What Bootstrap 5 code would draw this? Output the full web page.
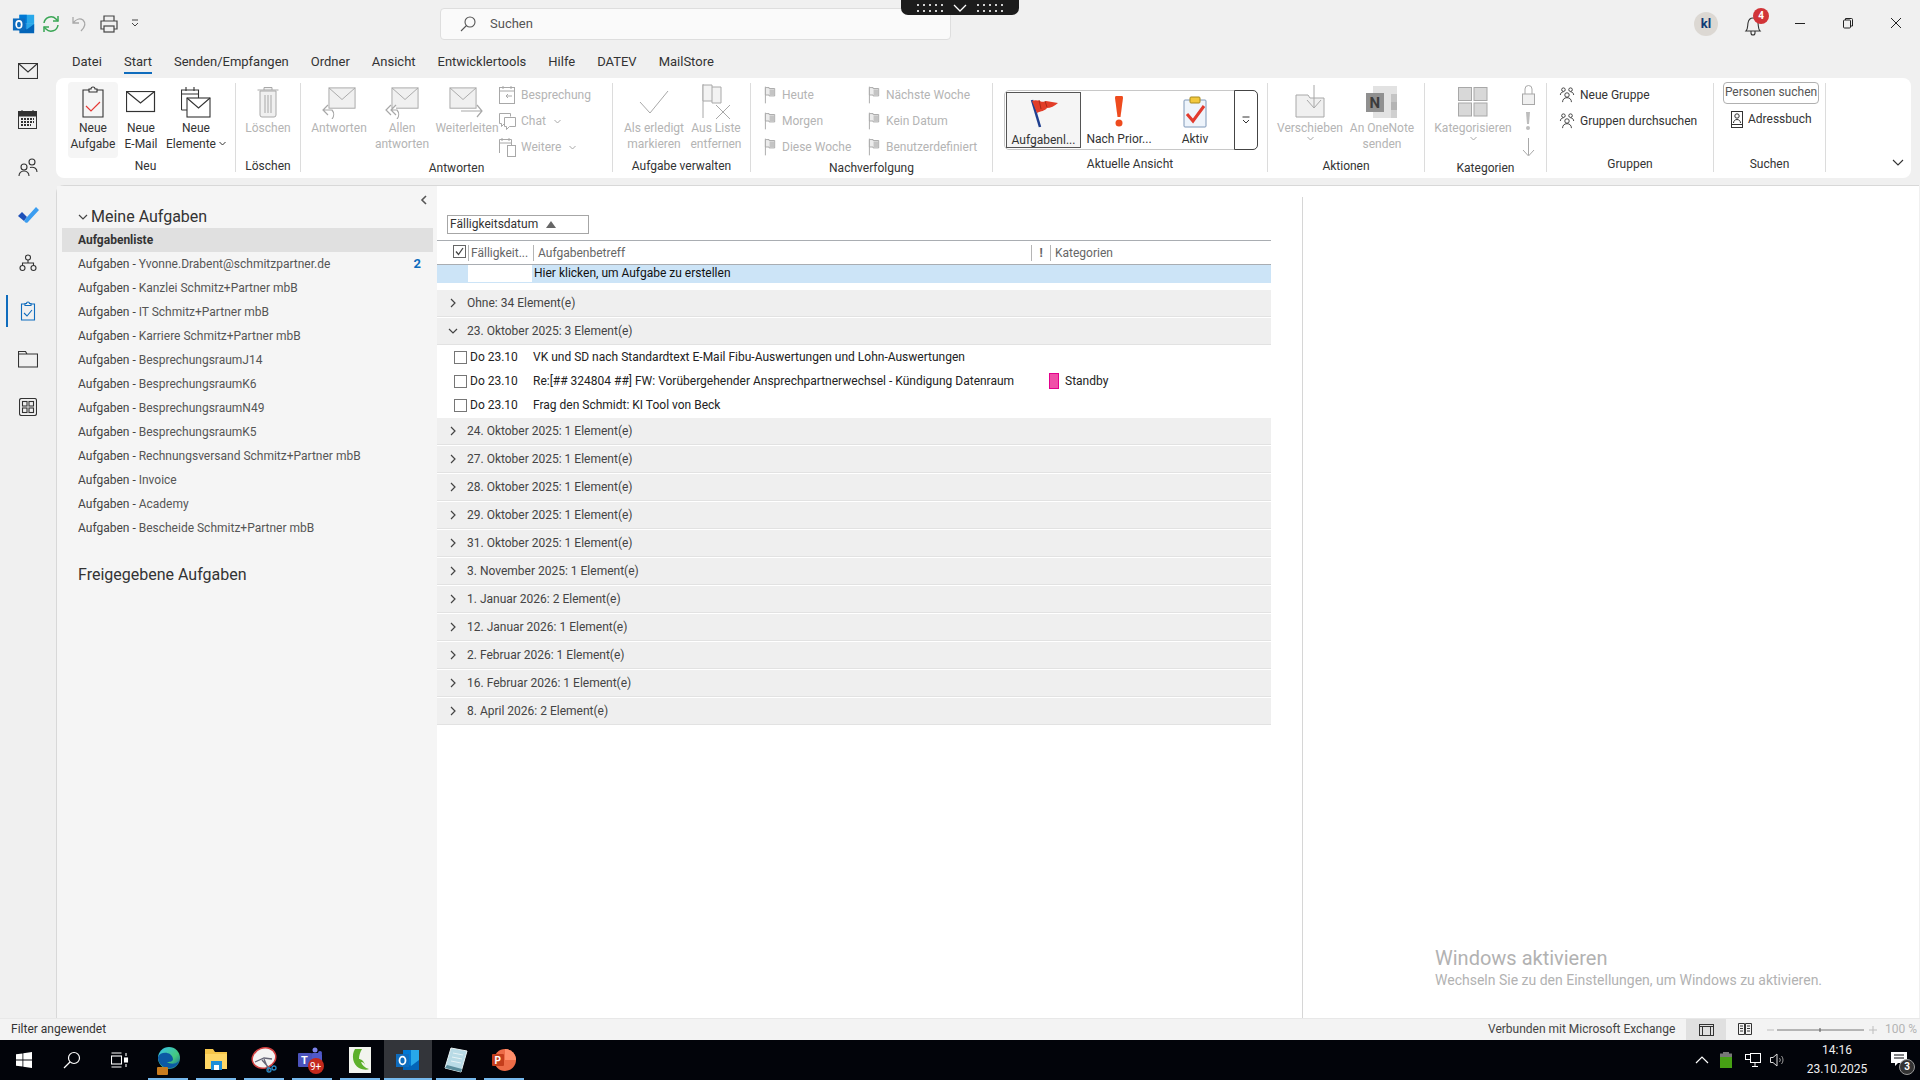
<!DOCTYPE html>
<html lang="de">
<head>
  <meta charset="UTF-8">
  <title>Aufgaben - Outlook</title>
  <link href="https://cdn.jsdelivr.net/npm/bootstrap@5.3.3/dist/css/bootstrap.min.css" rel="stylesheet">
  <style>
    body { width: 1920px; height: 1080px; overflow: hidden; background: #f0f0f0; font-family: Roboto, "Liberation Sans", sans-serif; font-size: 12px; color: #333; line-height: 16px; }
    svg { display: block; flex: none; }
    /* title bar */
    .title-bar { height: 47px; position: relative; }
    .qa-icon { width: 29px; }
    .qa-strip { padding-left: 12px; width: 440px; }
    .search-box { width: 511px; height: 32px; margin-top: 8px; background: #fafafa; border: 1px solid #dedede; border-radius: 4px; padding-left: 18px; font-size: 13px; color: #555; gap: 13px; }
    .drag-handle { position: absolute; left: 901px; top: 0; width: 118px; height: 15px; background: #1c1c1c; border-radius: 0 0 7px 7px; }
    .win-area { margin-left: auto; }
    .avatar-dot { width: 24px; height: 24px; border-radius: 50%; background: #dcd8d3; color: #0f3a76; font-weight: 700; font-size: 13px; position: absolute; left: 1694px; top: 12px; }
    .bell-wrap { position: absolute; left: 1743px; top: 13px; }
    .bell-count { position: absolute; left: 1753px; top: 8px; width: 16px; height: 16px; border-radius: 50%; background: #d13438; color: #fff; font-size: 10px; font-weight: 700; line-height: 16px; text-align: center; }
    .win-btn { position: absolute; top: 17px; }
    .win-min { left: 1794px; } .win-max { left: 1842px; } .win-close { left: 1890px; }
    /* rail */
    .rail { width: 56px; flex: none; position: relative; }
    .rail-item { height: 48px; position: relative; }
    .rail-active::before { content: ""; position: absolute; left: 6px; top: 8px; width: 2px; height: 32px; background: #0f6cbd; }
    /* tabs */
    .tab-row { height: 31px; padding-left: 8px; font-size: 13px; color: #333; }
    .tab-item { padding: 7px 8px 0; margin-right: 6px; position: relative; height: 31px; white-space: nowrap; }
    .tab-on::after { content: ""; position: absolute; left: 8px; right: 8px; bottom: 4px; height: 2px; background: #0f6cbd; }
    /* ribbon */
    .ribbon { height: 100px; width: 1855px; background: #fff; border-radius: 8px; padding: 5px 0 6px; position: relative; }
    .rb-grp { height: 89px; border-right: 1px solid #dcdcdc; flex: none; display: flex; flex-direction: column; }
    .rb-body { height: 77px; display: flex; }
    .rb-label { height: 16px; text-align: center; color: #333; white-space: nowrap; }
    .g-neu { width: 180px; } .g-neu .rb-body { padding-left: 12px; }
    .g-del { width: 65px; }
    .g-ant { width: 312px; } .g-ant .rb-body { padding-left: 8px; }
    .g-auf { width: 138px; } .g-auf .rb-body { padding-left: 9px; }
    .g-nach { width: 242px; } .g-nach .rb-body { padding-left: 13px; }
    .g-ans { width: 275px; }
    .g-akt { width: 157px; } .g-akt .rb-body { padding-left: 9px; }
    .g-kat { width: 122px; } .g-kat .rb-body { padding-left: 10px; }
    .g-gru { width: 167px; } .g-gru .rb-body { padding-left: 12px; }
    .g-suc { width: 112px; } .g-suc .rb-body { padding-left: 9px; }
    .rb-big { margin-top: -1px; height: 76px; display: flex; flex-direction: column; align-items: center; text-align: center; border-radius: 4px; flex: none; }
    .rb-big .big-ico { height: 38px; display: flex; align-items: center; justify-content: center; padding-top: 2px; }
    .big-50 { width: 50px; background: #f5f5f5; } .big-46 { width: 46px; } .big-64 { width: 64px; } .big-65 { width: 64px; }
    .big-60 { width: 60px; } .big-66 { width: 66px; } .big-78 { width: 78px; } .big-76 { width: 76px; }
    .off { color: #b4b4b4; }
    .rb-col { margin-top: -1px; display: flex; flex-direction: column; flex: none; }
    .rb-small { height: 26px; display: flex; align-items: center; white-space: nowrap; gap: 5px; }
    .col-w1 { width: 104px; }
    .col-kat { width: 34px; align-items: center; }
    .tiny-caret { display: inline-block; margin-left: 3px; vertical-align: 2px; }
    .galley { margin: 7px 0 0 11px; width: 254px; height: 60px; border: 1px solid #c8c8c8; border-radius: 5px; position: relative; padding: 1px; }
    .gal-item { width: 76px; height: 56px; display: flex; flex-direction: column; align-items: center; padding-top: 4px; gap: 3px; white-space: nowrap; flex: none; }
    .gal-on { background: #f5f5f5; border: 1px solid #555; width: 75px; }
    .gal-more { position: absolute; right: -1px; top: -1px; width: 24px; height: 60px; border: 1px solid #444; border-radius: 0 5px 5px 0; background: #fff; }
    .find-box { width: 96px; height: 22px; border: 1px solid #b0b0b0; border-radius: 4px; text-align: center; line-height: 18px; color: #555; white-space: nowrap; margin-bottom: 2px; }
    .rb-collapse { position: absolute; right: 7px; top: 81px; }
    /* workspace */
    .workspace { margin-top: 7px; height: 833px; width: 1863px; background: #fff; border-radius: 8px 0 0 0; border-top: 1px solid #d8d8d8; border-left: 1px solid #d8d8d8; }
    .pane { width: 380px; flex: none; background: #f5f5f5; padding: 4px 4px 0 5px; position: relative; }
    .pane-head { height: 38px; padding-left: 16px; padding-top: 16px; font-size: 16px; line-height: 24px; gap: 3px; white-space: nowrap; color: #333; }
    .pane-toggle { position: absolute; left: 363px; top: 9px; }
    .folder-row { height: 24px; padding-left: 16px; line-height: 24px; white-space: nowrap; color: #555; }
    .folder-row b { color: #333; }
    .folder-on { background: #e0e0e0; }
    .folder-pre { color: #444; }
    .folder-num { color: #0f6cbd; font-weight: 700; font-size: 13px; margin-left: auto; margin-right: 12px; }
    .pane-shared { margin-top: 23px; padding-left: 16px; font-size: 16px; line-height: 24px; color: #333; }
    .task-area { width: 865px; flex: none; padding-top: 29px; }
    .sort-box { width: 142px; height: 19px; margin-left: 10px; border: 1px solid #a6a6a6; padding-left: 2px; line-height: 17px; gap: 8px; color: #333; }
    .col-head { margin-top: 6px; width: 834px; height: 25px; border-top: 1px solid #a9adb2; border-bottom: 1px solid #a9adb2; color: #666; align-items: center; }
    .col-a { width: 32px; height: 16px; padding-left: 16px; border-right: 1px solid #b5b5b5; flex: none; }
    .col-b { width: 65px; height: 16px; padding-left: 2px; border-right: 1px solid #b5b5b5; flex: none; white-space: nowrap; }
    .col-c { width: 498px; height: 16px; padding-left: 4px; border-right: 1px solid #b5b5b5; flex: none; }
    .col-d { width: 19px; height: 16px; border-right: 1px solid #b5b5b5; text-align: center; font-weight: 700; flex: none; }
    .col-e { padding-left: 4px; }
    .new-row { width: 834px; height: 18px; background: #cce4f7; color: #111; line-height: 17px; }
    .new-cell { width: 64px; margin-left: 31px; background: #fff; margin-right: 2px; height: 17px; }
    .grp-row { width: 834px; height: 27px; margin-bottom: 1px; background: #efefef; border-bottom: 1px solid #e2e2e2; padding-left: 11px; gap: 9px; color: #444; align-items: center; }
    .grp-first { margin-top: 7px; }
    .item-list { margin-top: -1px; margin-bottom: 1px; }
    .item-row { width: 834px; height: 24px; align-items: center; color: #222; white-space: nowrap; }
    .item-chk { width: 13px; height: 13px; margin-left: 17px; border: 1px solid #767676; flex: none; }
    .item-date { width: 66px; padding-left: 3px; flex: none; }
    .item-subj { width: 516px; flex: none; }
    .cat-tag { width: 10px; height: 16px; background: #f04fa8; border: 1px solid #e3008c; margin-right: 6px; flex: none; }
    .read-pane { flex: 1; border-left: 1px solid #d6d6d6; margin-top: 11px; margin-left: 0; }
    .win-mark { position: absolute; left: 1435px; top: 945px; color: #b2b2b2; font-size: 14px; line-height: 18px; white-space: nowrap; z-index: 3; }
    .win-mark div:first-child { font-size: 20px; line-height: 26px; }
    /* status + taskbar */
    .status-bar { height: 22px; background: #f3f3f3; border-top: 1px solid #e8e8e8; position: relative; color: #333; padding-left: 11px; line-height: 20px; }
    .status-right { margin-left: auto; }
    .status-txt { width: 198px; color: #444; white-space: nowrap; }
    .view-on { width: 40px; height: 21px; background: #e0e0e0; }
    .view-off { width: 38px; height: 21px; }
    .zoom-txt { color: #b4b4b4; width: 38px; padding-left: 3px; }
    .task-bar { height: 40px; background: #02040a; color: #f0f0f0; position: relative; }
    .tb-slot { width: 48px; height: 40px; position: relative; }
    .tb-slot.tb-run::after { content: ""; position: absolute; left: 4px; right: 4px; bottom: 0; height: 2px; background: #76b9ed; }
    .tb-slot.tb-cur { background: #33353a; }
    .tb-slot.tb-cur::after { left: 0; right: 0; }
    .tray { margin-left: auto; padding-right: 12px; gap: 0; }
    .clock-box { width: 70px; text-align: center; line-height: 19px; margin: 0 19px 0 7px; white-space: nowrap; }
    .tray-ico { width: 25px; }
    .note-wrap { position: relative; }
    .note-count { position: absolute; left: 8px; top: 7px; width: 16px; height: 16px; border-radius: 50%; background: #333; border: 1px solid #999; color: #fff; font-size: 10px; font-weight: 700; line-height: 14px; text-align: center; }
  </style>
</head>
<body class="d-flex flex-column position-relative">

  <svg width="0" height="0" class="position-absolute">
    <defs>
      <symbol id="chev-r" viewBox="0 0 10 10"><path d="M3 1l4 4-4 4" fill="none" stroke="#444" stroke-width="1.2"/></symbol>
      <symbol id="chev-d" viewBox="0 0 10 10"><path d="M1 3l4 4 4-4" fill="none" stroke="#444" stroke-width="1.2"/></symbol>
      <symbol id="flag-off" viewBox="0 0 14 18"><path d="M1.5 0v18" stroke="#a8a8a8" fill="none"/><path d="M1.5 1h4v1h6v8h-6v-1h-4z" fill="#ececec" stroke="#a8a8a8"/><rect x="6" y="3" width="5" height="6" fill="#c4c4c4"/></symbol>
      <symbol id="group-ico" viewBox="0 0 18 18"><g fill="none" stroke="#333"><circle cx="5" cy="3" r="2"/><circle cx="13" cy="3" r="2"/><circle cx="9" cy="9" r="2.5"/><path d="M1.5 9c0-2 1.500-3.500 3.500-3.500M16.500 9c0-2-1.500-3.500-3.500-3.500M4 17c0-3 2-5 5-5s5 2 5 5"/></g></symbol>
      <symbol id="envelope-off" viewBox="0 0 30 30"><rect x="1" y="3" width="27" height="21" fill="#f0f0f0" stroke="#a8a8a8"/><path d="M1 3l13.500 12L28 3" fill="none" stroke="#a8a8a8"/></symbol>
      <symbol id="olk" viewBox="0 0 26 26"><rect x="8" y="3" width="16" height="9" fill="#28a8ea"/><rect x="8" y="3" width="8" height="9" fill="#0078d4"/><rect x="16" y="12" width="8" height="8" fill="#28a8ea"/><rect x="8" y="12" width="8" height="8" fill="#0078d4"/><path d="M8 14l8 5 8-6v10H8z" fill="#0364b8"/><rect x="1" y="7" width="13" height="13" fill="#0f6cbd"/><ellipse cx="7.500" cy="13.500" rx="3" ry="3.800" fill="none" stroke="#fff" stroke-width="1.800"/></symbol>
    </defs>
  </svg>

  <!-- Titelleiste -->
  <div class="title-bar d-flex flex-none">
    <div class="qa-strip d-flex align-items-center">
      <div class="qa-icon"><svg width="24" height="24"><use href="#olk"/></svg></div>
      <div class="qa-icon"><svg width="20" height="20" viewBox="0 0 20 20" fill="none" stroke="#3aa655" stroke-width="1.500"><path d="M3 9a7 7 0 0 1 12-4l2 2M17 11a7 7 0 0 1-12 4l-2-2"/><path d="M17 2v5h-5M3 18v-5h5"/></svg></div>
      <div class="qa-icon"><svg width="20" height="20" viewBox="0 0 20 20" fill="none" stroke="#a8a8a8" stroke-width="1.300"><path d="M3 3v6h6M3 9c3-4 7-5 10-3 3 3 2 7-2 11"/></svg></div>
      <div class="qa-icon"><svg width="20" height="20" viewBox="0 0 20 20" fill="none" stroke="#444" stroke-width="1.200"><path d="M5 7V2h10v5M5 15H2V7h16v8h-3"/><rect x="5" y="12" width="10" height="6"/></svg></div>
      <div class="qa-icon"><svg width="14" height="14" viewBox="0 0 14 14" fill="none" stroke="#444"><path d="M4 3h6M4 6l3 3 3-3"/></svg></div>
    </div>
    <div class="search-box d-flex align-items-center">
      <svg width="18" height="18" viewBox="0 0 18 18" fill="none" stroke="#555" stroke-width="1.100"><circle cx="11" cy="7" r="5"/><path d="M7.500 10.500L2 16"/></svg>
      <span>Suchen</span>
    </div>
    <div class="drag-handle d-flex align-items-center justify-content-between px-3">
      <svg width="26" height="10" viewBox="0 0 26 10" fill="#cfcfcf"><path d="M0 1h2v2H0zM6 1h2v2H6zM12 1h2v2h-2zM18 1h2v2h-2zM24 1h2v2h-2zM0 7h2v2H0zM6 7h2v2H6zM12 7h2v2h-2zM18 7h2v2h-2zM24 7h2v2h-2z"/></svg>
      <svg width="14" height="8" viewBox="0 0 14 8" fill="none" stroke="#fff" stroke-width="1.300"><path d="M1 1l6 6 6-6"/></svg>
      <svg width="26" height="10" viewBox="0 0 26 10" fill="#cfcfcf"><path d="M0 1h2v2H0zM6 1h2v2H6zM12 1h2v2h-2zM18 1h2v2h-2zM24 1h2v2h-2zM0 7h2v2H0zM6 7h2v2H6zM12 7h2v2h-2zM18 7h2v2h-2zM24 7h2v2h-2z"/></svg>
    </div>
    <div class="avatar-dot d-flex align-items-center justify-content-center">kl</div>
    <div class="bell-wrap"><svg width="20" height="24" viewBox="0 0 20 24" fill="none" stroke="#333" stroke-width="1.100"><path d="M3 18c2-2 1.500-5 2-8 .5-3 2.500-5 5-5s4.500 2 5 5c.5 3 0 6 2 8zM8 18.500v1.500a2 2 0 0 0 4 0v-1.500"/></svg></div>
    <div class="bell-count">4</div>
    <svg class="win-btn win-min" width="12" height="12" viewBox="0 0 12 12" stroke="#222"><path d="M1 6.500h10"/></svg>
    <svg class="win-btn win-max" width="12" height="12" viewBox="0 0 12 12" fill="none" stroke="#222"><rect x="1.500" y="3" width="7" height="8" rx="1"/><path d="M3.500 3V1.500h6a1 1 0 0 1 1 1V9H8.500"/></svg>
    <svg class="win-btn win-close" width="12" height="12" viewBox="0 0 12 12" stroke="#222"><path d="M1 1l10 10M11 1L1 11"/></svg>
  </div>

  <div class="d-flex flex-grow-1">
    <!-- Navigationsleiste -->
    <div class="rail">
      <div class="rail-item d-flex align-items-center justify-content-center"><svg width="20" height="16" viewBox="0 0 20 16" fill="none" stroke="#333" stroke-width="1.100"><rect x=".5" y=".5" width="19" height="15"/><path d="M.5.5L10 9 19.500.5"/></svg></div>
      <div class="rail-item d-flex align-items-center justify-content-center"><svg width="20" height="20" viewBox="0 0 20 20" fill="none" stroke="#333"><rect x=".5" y="2.500" width="18" height="17"/><rect x="1" y="3" width="17" height="4" fill="#333"/><path d="M4 1v3M15 1v3" /><path d="M3 10h13M3 13h13M3 16h10" stroke-width="2" stroke-dasharray="2 1"/></svg></div>
      <div class="rail-item d-flex align-items-center justify-content-center"><svg width="20" height="20" viewBox="0 0 20 20" fill="none" stroke="#333" stroke-width="1.100"><circle cx="6" cy="10" r="3"/><path d="M1 19c0-3 2-5 5-5s5 2 5 5"/><circle cx="14" cy="5" r="3"/><path d="M12 10.500c4-1 7 1 7 4.500"/></svg></div>
      <div class="rail-item d-flex align-items-center justify-content-center"><svg width="22" height="18" viewBox="0 0 22 18"><path d="M1 10l4-4 5 5-3 4z" fill="#1d4fb8"/><path d="M7 15l3-4 9-10 3 3-11 12a2 2 0 0 1-3 0z" fill="#3b9df0"/></svg></div>
      <div class="rail-item d-flex align-items-center justify-content-center"><svg width="18" height="18" viewBox="0 0 18 18" fill="none" stroke="#333" stroke-width="1.100"><circle cx="9" cy="3.500" r="2.500"/><circle cx="3.500" cy="14" r="2.500"/><circle cx="14.500" cy="14" r="2.500"/><path d="M3.500 11.500V9h11v2.500M9 6v3"/></svg></div>
      <div class="rail-item rail-active d-flex align-items-center justify-content-center"><svg width="16" height="20" viewBox="0 0 16 20" fill="none" stroke="#0f6cbd" stroke-width="1.100"><path d="M5 3H1.500v16h13V3H11"/><path d="M5 4.500V2.500h1.500a1.500 1.500 0 0 1 3 0H11v2z"/><path d="M4 12l3 3 5-6"/></svg></div>
      <div class="rail-item d-flex align-items-center justify-content-center"><svg width="20" height="17" viewBox="0 0 20 17" fill="none" stroke="#333" stroke-width="1.100"><path d="M.5 16V.5h7l1.500 2.500h10.500v13zM.5 3H9"/></svg></div>
      <div class="rail-item d-flex align-items-center justify-content-center"><svg width="18" height="18" viewBox="0 0 18 18" fill="none" stroke="#333" stroke-width="1.100"><rect x=".5" y=".5" width="17" height="17" rx="2"/><rect x="3.500" y="3.500" width="4.500" height="4.500"/><rect x="10" y="3.500" width="4.500" height="4.500"/><rect x="3.500" y="10" width="4.500" height="4.500"/><rect x="10" y="10" width="4.500" height="4.500"/></svg></div>
    </div>

    <div class="flex-grow-1 d-flex flex-column">
      <div class="tab-row d-flex">
        <div class="tab-item">Datei</div>
        <div class="tab-item tab-on">Start</div>
        <div class="tab-item">Senden/Empfangen</div>
        <div class="tab-item">Ordner</div>
        <div class="tab-item">Ansicht</div>
        <div class="tab-item">Entwicklertools</div>
        <div class="tab-item">Hilfe</div>
        <div class="tab-item">DATEV</div>
        <div class="tab-item">MailStore</div>
      </div>

      <!-- Menüband -->
      <div class="ribbon d-flex">
        <div class="rb-grp g-neu">
          <div class="rb-body">
            <div class="rb-big big-50"><div class="big-ico"><svg width="22" height="32" viewBox="0 0 22 32" fill="none" stroke="#333" stroke-width="1.100"><path d="M7 4H1v27h20V4h-6"/><path d="M7 6V3h2a2 2 0 0 1 4 0h2v3z"/><path d="M4 20l5 5 9-9" stroke="#e53935" stroke-width="1.200"/></svg></div>Neue<br>Aufgabe</div>
            <div class="rb-big big-46"><div class="big-ico"><svg width="30" height="22" viewBox="0 0 30 22" fill="none" stroke="#333" stroke-width="1.200"><rect x=".5" y=".5" width="28" height="20"/><path d="M.5.5L14.500 12 28.500.5"/></svg></div>Neue<br>E-Mail</div>
            <div class="rb-big big-64"><div class="big-ico"><svg width="30" height="32" viewBox="0 0 30 32" fill="none" stroke="#333" stroke-width="1.100"><path d="M.5 24V4h17v8M.5 8h17M5 1v4M13 1v4M.5 24H6"/><rect x="6" y="12" width="23" height="19" fill="#fff"/><path d="M6 12l11.500 10L29 12"/></svg></div>Neue<br><span>Elemente<svg class="tiny-caret d-inline" width="7" height="5" viewBox="0 0 7 5" fill="none" stroke="#333"><path d="M.5 1l3 3 3-3"/></svg></span></div>
          </div>
          <div class="rb-label">Neu</div>
        </div>
        <div class="rb-grp g-del">
          <div class="rb-body">
            <div class="rb-big big-65 off"><div class="big-ico"><svg width="22" height="32" viewBox="0 0 22 32" fill="#f0f0f0" stroke="#a8a8a8"><path d="M7 4V1.500h8V4M.5 4h21"/><path d="M3 5h16v24a2 2 0 0 1-2 2H5a2 2 0 0 1-2-2z"/><path d="M8 9v18M11 9v18M14 9v18" fill="none"/></svg></div>Löschen</div>
          </div>
          <div class="rb-label">Löschen</div>
        </div>
        <div class="rb-grp g-ant">
          <div class="rb-body">
            <div class="rb-big big-60 off"><div class="big-ico"><svg width="36" height="34" viewBox="0 0 36 34"><use href="#envelope-off" x="7" y="0" width="29" height="29"/><path d="M7 20l-5 5 5 5M2 25h9a7 7 0 0 1 0 9" fill="#fff" stroke="#a8a8a8" stroke-width="1.200"/></svg></div>Antworten</div>
            <div class="rb-big big-66 off"><div class="big-ico"><svg width="36" height="34" viewBox="0 0 36 34"><use href="#envelope-off" x="7" y="0" width="29" height="29"/><path d="M7 20l-5 5 5 5M12 20l-5 5 5 5M7 25h6a7 7 0 0 1 0 9" fill="#fff" stroke="#a8a8a8" stroke-width="1.200"/></svg></div>Allen<br>antworten</div>
            <div class="rb-big big-64 off"><div class="big-ico"><svg width="36" height="34" viewBox="0 0 36 34"><use href="#envelope-off" x="0" y="0" width="29" height="29"/><path d="M12 26h21M28 20l5 6-5 6" fill="none" stroke="#a8a8a8" stroke-width="1.200"/></svg></div>Weiterleiten</div>
            <div class="rb-col off">
              <div class="rb-small"><svg width="17" height="20" viewBox="0 0 17 20" fill="none" stroke="#a8a8a8"><rect x=".5" y="2.500" width="15" height="16"/><path d="M.5 6h15M4 1v3M12 1v3M13 11H7l2-2M7 11l2 2"/></svg>Besprechung</div>
              <div class="rb-small"><svg width="17" height="20" viewBox="0 0 17 20" fill="none" stroke="#a8a8a8"><path d="M.5 2.500h11v3M.5 2.500v10h2v3l3-3"/><path d="M5.500 6.500h11v9h-6l-3 3v-3h-2z" fill="#fff"/></svg>Chat<svg class="tiny-caret d-inline" width="7" height="5" viewBox="0 0 7 5" fill="none" stroke="#a8a8a8"><path d="M.5 1l3 3 3-3"/></svg></div>
              <div class="rb-small"><svg width="17" height="20" viewBox="0 0 17 20" fill="none" stroke="#a8a8a8"><path d="M.5 16V2.500h12V8M.5 6h12M3 1v3M10 1v3"/><rect x="8.500" y="8.500" width="8" height="11"/></svg>Weitere<svg class="tiny-caret d-inline" width="7" height="5" viewBox="0 0 7 5" fill="none" stroke="#a8a8a8"><path d="M.5 1l3 3 3-3"/></svg></div>
            </div>
          </div>
          <div class="rb-label">Antworten</div>
        </div>
        <div class="rb-grp g-auf">
          <div class="rb-body">
            <div class="rb-big big-64 off"><div class="big-ico"><svg width="30" height="24" viewBox="0 0 30 24" fill="none" stroke="#a8a8a8"><path d="M1 12l10 11L29 1"/></svg></div>Als erledigt<br>markieren</div>
            <div class="rb-big big-60 off"><div class="big-ico"><svg width="30" height="36" viewBox="0 0 30 36" fill="none" stroke="#a8a8a8"><path d="M2 0v34"/><path d="M2 1h9v2h9v16h-9v-2H2z" fill="#f3f3f3"/><path d="M11 3v14"/><path d="M15 21l14 14M29 21L15 35"/></svg></div>Aus Liste<br>entfernen</div>
          </div>
          <div class="rb-label">Aufgabe verwalten</div>
        </div>
        <div class="rb-grp g-nach">
          <div class="rb-body off">
            <div class="rb-col col-w1">
              <div class="rb-small"><svg width="13" height="18"><use href="#flag-off"/></svg>Heute</div>
              <div class="rb-small"><svg width="13" height="18"><use href="#flag-off"/></svg>Morgen</div>
              <div class="rb-small"><svg width="13" height="18"><use href="#flag-off"/></svg>Diese Woche</div>
            </div>
            <div class="rb-col">
              <div class="rb-small"><svg width="13" height="18"><use href="#flag-off"/></svg>Nächste Woche</div>
              <div class="rb-small"><svg width="13" height="18"><use href="#flag-off"/></svg>Kein Datum</div>
              <div class="rb-small"><svg width="13" height="18"><use href="#flag-off"/></svg>Benutzerdefiniert</div>
            </div>
          </div>
          <div class="rb-label">Nachverfolgung</div>
        </div>
        <div class="rb-grp g-ans">
          <div class="rb-body">
            <div class="galley d-flex">
              <div class="gal-item gal-on"><svg width="30" height="32" viewBox="0 0 30 32"><path d="M3 3l8 27" stroke="#1f3f8f" stroke-width="2.500"/><path d="M3 4c6-3 10 3 14 0l12 2c-3 3-8 5-11 5-2 3-6 3-10 5z" fill="#e23d28"/><path d="M10 3l2 9M16 4l2 6" stroke="#a92a18"/></svg>Aufgabenl...</div>
              <div class="gal-item"><svg width="12" height="32" viewBox="0 0 12 32"><path d="M2 2a4 3 0 0 1 8 0l-2.500 19h-3z" fill="#ee4b1e"/><circle cx="6" cy="27" r="3.500" fill="#ee4b1e"/></svg>Nach Prior...</div>
              <div class="gal-item"><svg width="26" height="32" viewBox="0 0 26 32"><rect x="2" y="4" width="22" height="27" rx="1" fill="#eef4fb" stroke="#7f98b8"/><rect x="8" y="1" width="10" height="6" rx="1" fill="#f2c83d" stroke="#a88a1f"/><path d="M5 18l6 7 11-15" fill="none" stroke="#e23b2e" stroke-width="3"/></svg>Aktiv</div>
              <div class="gal-more d-flex align-items-center justify-content-center"><svg width="10" height="10" viewBox="0 0 10 10" fill="none" stroke="#333"><path d="M1.500 2h7M2 5l3 3 3-3"/></svg></div>
            </div>
          </div>
          <div class="rb-label">Aktuelle Ansicht</div>
        </div>
        <div class="rb-grp g-akt">
          <div class="rb-body">
            <div class="rb-big big-66 off"><div class="big-ico"><svg width="30" height="36" viewBox="0 0 30 36" fill="#f0f0f0" stroke="#a8a8a8"><path d="M1 33V11h12l2 3h14v19z"/><path d="M19 1v22M12 16l7 8 7-8" fill="none"/></svg></div>Verschieben<br><svg class="d-inline" width="7" height="5" viewBox="0 0 7 5" fill="none" stroke="#a8a8a8"><path d="M.5 1l3 3 3-3"/></svg></div>
            <div class="rb-big big-78 off"><div class="big-ico"><svg width="34" height="36" viewBox="0 0 34 36"><rect x="8" y="2" width="24" height="32" fill="#e2e2e2"/><rect x="26" y="10" width="6" height="8" fill="#c4c4c4"/><rect x="26" y="18" width="6" height="8" fill="#b4b4b4"/><rect x="26" y="26" width="6" height="8" fill="#d0d0d0"/><rect x="1" y="9" width="18" height="19" fill="#909090"/><text x="4.500" y="24" font-size="15" font-weight="700" fill="#3c3c3c" font-family="Roboto, sans-serif">N</text></svg></div>An OneNote<br>senden</div>
            <div></div>
          </div>
          <div class="rb-label">Aktionen</div>
        </div>
        <div class="rb-grp g-kat">
          <div class="rb-body">
            <div class="rb-big big-76 off"><div class="big-ico"><svg width="30" height="30" viewBox="0 0 30 30" fill="#d8d8d8" stroke="#a8a8a8"><rect x=".5" y=".5" width="13" height="13"/><rect x="16" y=".5" width="13" height="13"/><rect x=".5" y="16" width="13" height="13"/><rect x="16" y="16" width="13" height="13"/></svg></div>Kategorisieren<br><svg class="d-inline" width="7" height="5" viewBox="0 0 7 5" fill="none" stroke="#a8a8a8"><path d="M.5 1l3 3 3-3"/></svg></div>
            <div class="rb-col col-kat">
              <div class="rb-small"><svg width="13" height="20" viewBox="0 0 13 20" fill="none" stroke="#a8a8a8"><rect x=".5" y="9" width="12" height="10.500" fill="#f0f0f0"/><path d="M3 9V4a3.500 3.500 0 0 1 7 0v5"/></svg></div>
              <div class="rb-small"><svg width="6" height="20" viewBox="0 0 6 20" fill="#bdbdbd"><path d="M1 1h4l-1 12H2z"/><circle cx="3" cy="17" r="2"/></svg></div>
              <div class="rb-small"><svg width="13" height="20" viewBox="0 0 13 20" fill="none" stroke="#a8a8a8"><path d="M6.500 1v17M1 13l5.500 6 5.500-6"/></svg></div>
            </div>
          </div>
          <div class="rb-label">Kategorien</div>
        </div>
        <div class="rb-grp g-gru">
          <div class="rb-body">
            <div class="rb-col">
              <div class="rb-small"><svg width="16" height="18"><use href="#group-ico"/></svg>Neue Gruppe</div>
              <div class="rb-small"><svg width="16" height="18"><use href="#group-ico"/></svg>Gruppen durchsuchen</div>
            </div>
          </div>
          <div class="rb-label">Gruppen</div>
        </div>
        <div class="rb-grp g-suc">
          <div class="rb-body">
            <div class="rb-col">
              <div class="find-box">Personen suchen</div>
              <div class="rb-small ps-2"><svg width="12" height="17" viewBox="0 0 12 17" fill="none" stroke="#333"><rect x=".5" y=".5" width="11" height="16"/><path d="M.5 13.500h11"/><circle cx="6" cy="5" r="2.200"/><path d="M2.500 12c0-2 1.500-3.500 3.500-3.500s3.500 1.500 3.500 3.500"/></svg>Adressbuch</div>
            </div>
          </div>
          <div class="rb-label">Suchen</div>
        </div>
        <svg class="rb-collapse" width="12" height="8" viewBox="0 0 12 8" fill="none" stroke="#333" stroke-width="1.100"><path d="M1 1l5 5 5-5"/></svg>
      </div>

      <!-- Arbeitsbereich -->
      <div class="workspace d-flex">
        <div class="pane">
          <svg class="pane-toggle" width="8" height="10" viewBox="0 0 8 10" fill="none" stroke="#555" stroke-width="1.600"><path d="M6 1L2 5l4 4"/></svg>
          <div class="pane-head d-flex align-items-center"><svg width="10" height="10"><use href="#chev-d"/></svg>Meine Aufgaben</div>
          <div class="folder-row folder-on"><b>Aufgabenliste</b></div>
          <div class="folder-row d-flex"><span class="folder-pre">Aufgaben -&nbsp;</span>Yvonne.Drabent@schmitzpartner.de<span class="folder-num">2</span></div>
          <div class="folder-row"><span class="folder-pre">Aufgaben -</span> Kanzlei Schmitz+Partner mbB</div>
          <div class="folder-row"><span class="folder-pre">Aufgaben -</span> IT Schmitz+Partner mbB</div>
          <div class="folder-row"><span class="folder-pre">Aufgaben -</span> Karriere Schmitz+Partner mbB</div>
          <div class="folder-row"><span class="folder-pre">Aufgaben -</span> BesprechungsraumJ14</div>
          <div class="folder-row"><span class="folder-pre">Aufgaben -</span> BesprechungsraumK6</div>
          <div class="folder-row"><span class="folder-pre">Aufgaben -</span> BesprechungsraumN49</div>
          <div class="folder-row"><span class="folder-pre">Aufgaben -</span> BesprechungsraumK5</div>
          <div class="folder-row"><span class="folder-pre">Aufgaben -</span> Rechnungsversand Schmitz+Partner mbB</div>
          <div class="folder-row"><span class="folder-pre">Aufgaben -</span> Invoice</div>
          <div class="folder-row"><span class="folder-pre">Aufgaben -</span> Academy</div>
          <div class="folder-row"><span class="folder-pre">Aufgaben -</span> Bescheide Schmitz+Partner mbB</div>
          <div class="pane-shared">Freigegebene Aufgaben</div>
        </div>

        <div class="task-area">
          <div class="sort-box d-flex align-items-center">Fälligkeitsdatum <svg width="10" height="7" viewBox="0 0 10 7" fill="#666"><path d="M5 0l5 7H0z"/></svg></div>
          <div class="col-head d-flex">
            <div class="col-a"><svg width="13" height="13" viewBox="0 0 13 13" fill="none" stroke="#666"><rect x=".5" y=".5" width="12" height="12"/><path d="M3 6.500l2.500 3L10 3" stroke="#444" stroke-width="1.300"/></svg></div>
            <div class="col-b">Fälligkeit...</div>
            <div class="col-c">Aufgabenbetreff</div>
            <div class="col-d">!</div>
            <div class="col-e">Kategorien</div>
          </div>
          <div class="new-row d-flex">
            <div class="new-cell"></div>
            <div>Hier klicken, um Aufgabe zu erstellen</div>
          </div>

          <div class="grp-row grp-first d-flex"><svg width="10" height="10"><use href="#chev-r"/></svg>Ohne: 34 Element(e)</div>
          <div class="grp-row d-flex"><svg width="10" height="10"><use href="#chev-d"/></svg>23. Oktober 2025: 3 Element(e)</div>
          <div class="item-list">
            <div class="item-row d-flex"><div class="item-chk"></div><div class="item-date">Do 23.10</div><div class="item-subj">VK und SD nach Standardtext E-Mail Fibu-Auswertungen und Lohn-Auswertungen</div></div>
            <div class="item-row d-flex"><div class="item-chk"></div><div class="item-date">Do 23.10</div><div class="item-subj">Re:[## 324804 ##] FW: Vorübergehender Ansprechpartnerwechsel - Kündigung Datenraum</div><div class="cat-tag"></div>Standby</div>
            <div class="item-row d-flex"><div class="item-chk"></div><div class="item-date">Do 23.10</div><div class="item-subj">Frag den Schmidt: KI Tool von Beck</div></div>
          </div>
          <div class="grp-row d-flex"><svg width="10" height="10"><use href="#chev-r"/></svg>24. Oktober 2025: 1 Element(e)</div>
          <div class="grp-row d-flex"><svg width="10" height="10"><use href="#chev-r"/></svg>27. Oktober 2025: 1 Element(e)</div>
          <div class="grp-row d-flex"><svg width="10" height="10"><use href="#chev-r"/></svg>28. Oktober 2025: 1 Element(e)</div>
          <div class="grp-row d-flex"><svg width="10" height="10"><use href="#chev-r"/></svg>29. Oktober 2025: 1 Element(e)</div>
          <div class="grp-row d-flex"><svg width="10" height="10"><use href="#chev-r"/></svg>31. Oktober 2025: 1 Element(e)</div>
          <div class="grp-row d-flex"><svg width="10" height="10"><use href="#chev-r"/></svg>3. November 2025: 1 Element(e)</div>
          <div class="grp-row d-flex"><svg width="10" height="10"><use href="#chev-r"/></svg>1. Januar 2026: 2 Element(e)</div>
          <div class="grp-row d-flex"><svg width="10" height="10"><use href="#chev-r"/></svg>12. Januar 2026: 1 Element(e)</div>
          <div class="grp-row d-flex"><svg width="10" height="10"><use href="#chev-r"/></svg>2. Februar 2026: 1 Element(e)</div>
          <div class="grp-row d-flex"><svg width="10" height="10"><use href="#chev-r"/></svg>16. Februar 2026: 1 Element(e)</div>
          <div class="grp-row d-flex"><svg width="10" height="10"><use href="#chev-r"/></svg>8. April 2026: 2 Element(e)</div>
        </div>

        <div class="read-pane"></div>
      </div>
    </div>
  </div>

  <div class="win-mark"><div>Windows aktivieren</div><div>Wechseln Sie zu den Einstellungen, um Windows zu aktivieren.</div></div>

  <!-- Statusleiste -->
  <div class="status-bar d-flex flex-none">
    <div>Filter angewendet</div>
    <div class="status-right d-flex">
      <div class="status-txt">Verbunden mit Microsoft Exchange</div>
      <div class="view-on d-flex align-items-center justify-content-center"><svg width="15" height="12" viewBox="0 0 15 12" fill="none" stroke="#333"><rect x=".5" y=".5" width="14" height="11"/><path d="M.5 2.500h14M3.500 2.500v9M11.500 2.500v9"/></svg></div>
      <div class="view-off d-flex align-items-center justify-content-center"><svg width="14" height="13" viewBox="0 0 14 13" fill="none" stroke="#333"><path d="M.5.5h6v11h-6zM7.500.5h6v11h-6zM2 3h3M2 5.500h3M2 8h3M9 3h3M9 5.500h3M9 8h3"/></svg></div>
      <div class="d-flex align-items-center">
        <svg width="118" height="12" viewBox="0 0 118 12" fill="none"><path d="M3 6h7M105 6h8M109 2v8" stroke="#bdbdbd"/><path d="M13 6h100" stroke="#777" transform="translate(0 0)" stroke-dasharray="87 100"/><path d="M56 4v4" stroke="#555"/></svg>
      </div>
      <div class="zoom-txt">100 %</div>
    </div>
  </div>

  <!-- Taskleiste -->
  <div class="task-bar d-flex flex-none">
    <div class="tb-slot d-flex align-items-center justify-content-center"><svg width="16" height="16" viewBox="0 0 16 16" fill="#fff"><path d="M0 2.300L6.500 1.400v6.200H0zM7.300 1.300L16 0v7.600H7.300zM0 8.400h6.500v6.200L0 13.700zM7.300 8.400H16V16l-8.700-1.300z"/></svg></div>
    <div class="tb-slot d-flex align-items-center justify-content-center"><svg width="18" height="18" viewBox="0 0 18 18" fill="none" stroke="#fff" stroke-width="1.200"><circle cx="11" cy="7" r="5.500"/><path d="M7 11l-6 6"/></svg></div>
    <div class="tb-slot d-flex align-items-center justify-content-center"><svg width="18" height="16" viewBox="0 0 18 16" fill="none" stroke="#fff" stroke-width="1.100"><rect x=".5" y="4" width="10" height="8"/><path d="M.5 1h10M.5 15h10M15 1v3M15 12v3"/><rect x="13.500" y="6" width="3" height="4" fill="#fff"/></svg></div>
    <div class="tb-slot tb-run d-flex align-items-center justify-content-center"><svg width="24" height="30" viewBox="0 0 24 30"><defs><linearGradient id="edgeg" x1="0" y1="0" x2="1" y2="1"><stop offset="0" stop-color="#35c1f1"/><stop offset=".6" stop-color="#45c97d"/><stop offset="1" stop-color="#0c59a4"/></linearGradient></defs><circle cx="13" cy="13" r="11" fill="url(#edgeg)"/><path d="M2 12c2-6 14-6 15 2 0 3-4 3-6 3 3 2 8 3 12-1-2 6-8 8-13 7C5 21 2 17 2 12z" fill="#0c59a4"/><rect x="1" y="22" width="11" height="8" rx="1" fill="#c97c1e"/></svg></div>
    <div class="tb-slot tb-run d-flex align-items-center justify-content-center"><svg width="24" height="24" viewBox="0 0 24 24"><path d="M1 1h8l2 3h12v17H1z" fill="#f6c64a"/><rect x="1" y="6" width="22" height="15" fill="#ffd766"/><rect x="7" y="13" width="11" height="9" fill="#1f8fd8"/><rect x="10" y="17" width="5" height="5" fill="#fff"/></svg></div>
    <div class="tb-slot tb-run d-flex align-items-center justify-content-center"><svg width="26" height="26" viewBox="0 0 26 26"><ellipse cx="13" cy="11" rx="12" ry="10" transform="rotate(-20 13 11)" fill="#f3f3f3" stroke="#d04040" stroke-width="1.500"/><path d="M4 15L13 11l8 1M13 12l5 12M11 13l8 9" stroke="#667" stroke-width="1.300" fill="none"/><circle cx="18" cy="23" r="2" fill="none" stroke="#2a8ac4" stroke-width="1.300"/><circle cx="23" cy="21" r="2" fill="none" stroke="#2a8ac4" stroke-width="1.300"/></svg></div>
    <div class="tb-slot tb-run d-flex align-items-center justify-content-center"><svg width="28" height="28" viewBox="0 0 28 28"><circle cx="17" cy="4" r="2.500" fill="#7b83eb"/><circle cx="22" cy="7" r="2" fill="#5059c9"/><rect x="13" y="7" width="11" height="14" rx="2" fill="#5059c9"/><rect x="0" y="7" width="14" height="14" rx="1" fill="#4b53bc"/><text x="3" y="18" font-size="11" font-weight="700" fill="#fff" font-family="Roboto, sans-serif">T</text><circle cx="18" cy="20" r="8" fill="#c4291c"/><text x="12" y="24" font-size="10" fill="#fff" font-family="Roboto, sans-serif">9+</text></svg></div>
    <div class="tb-slot tb-run d-flex align-items-center justify-content-center"><svg width="22" height="26" viewBox="0 0 22 26"><rect width="22" height="26" fill="#f2f4ee"/><path d="M6 2C2 8 4 18 10 21c4 2 8 2 10 1-4-1-7-4-8-7 2 0 3 1 4 3-1-4-4-6-6-6 0-3 1-7 3-10z" fill="#5db02c"/></svg></div>
    <div class="tb-slot tb-run tb-cur d-flex align-items-center justify-content-center"><svg width="26" height="26"><use href="#olk"/></svg></div>
    <div class="tb-slot tb-run d-flex align-items-center justify-content-center"><svg width="24" height="26" viewBox="0 0 24 26"><path d="M7 1l16 3-6 21L1 21z" fill="#b9dbe6" stroke="#eaf4f6"/><path d="M1 21l16 4 1-3L3 18z" fill="#5b8d9c"/><path d="M9 6l10 2M8 10l10 2M7 14l10 2" stroke="#e6f2f5"/></svg></div>
    <div class="tb-slot tb-run d-flex align-items-center justify-content-center"><svg width="24" height="24" viewBox="0 0 24 24"><circle cx="13" cy="12" r="11" fill="#ed6c47"/><path d="M13 1a11 11 0 0 1 11 11H13z" fill="#ff8f6b"/><rect x="0" y="6" width="12" height="12" rx="1" fill="#c43e1c"/><text x="2.500" y="16" font-size="10" font-weight="700" fill="#fff" font-family="Roboto, sans-serif">P</text></svg></div>

    <div class="tray d-flex align-items-center">
      <div class="tray-ico"><svg width="14" height="8" viewBox="0 0 14 8" fill="none" stroke="#fff" stroke-width="1.200"><path d="M1 7l6-6 6 6"/></svg></div>
      <div class="tray-ico"><svg width="12" height="16" viewBox="0 0 12 16"><rect x="3" y="0" width="6" height="2" fill="#777"/><rect y="1.500" width="12" height="4" fill="#777"/><rect y="5" width="12" height="11" fill="#46a014"/></svg></div>
      <div class="tray-ico"><svg width="16" height="14" viewBox="0 0 16 14" fill="none" stroke="#fff"><rect x="5.500" y=".5" width="10" height="9"/><path d="M10 10v3M7 13.500h6"/><rect x=".5" y="1.500" width="5" height="5" fill="#02040a"/></svg></div>
      <div class="tray-ico"><svg width="16" height="14" viewBox="0 0 16 14" fill="none" stroke="#ddd"><path d="M.5 4.500H3L7 1v12L3 9.500H.5z"/><path d="M9.500 5a3 3 0 0 1 0 4M11.500 3a6 6 0 0 1 0 8" stroke="#999"/></svg></div>
      <div class="clock-box">14:16<br>23.10.2025</div>
      <div class="note-wrap"><svg width="17" height="16" viewBox="0 0 17 16" fill="#fff"><path d="M0 0h16v11h-9l-3 3v-3H0z"/><path d="M3 3h10M3 6h10" stroke="#02040a"/></svg><div class="note-count">3</div></div>
    </div>
  </div>

  <script src="https://cdn.jsdelivr.net/npm/bootstrap@5.3.3/dist/js/bootstrap.bundle.min.js"></script>
</body>
</html>
